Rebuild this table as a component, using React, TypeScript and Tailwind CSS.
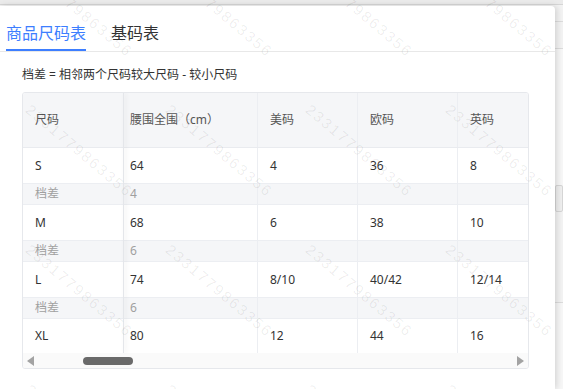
import React from "react";

const FONT = "font-['Noto_Sans','Noto_Sans_CJK_SC',sans-serif]";

type Row = { kind: "size"; cells: string[] } | { kind: "diff"; cells: string[] };

const rows: Row[] = [
  { kind: "size", cells: ["S", "64", "4", "36", "8"] },
  { kind: "diff", cells: ["档差", "4", "", "", ""] },
  { kind: "size", cells: ["M", "68", "6", "38", "10"] },
  { kind: "diff", cells: ["档差", "6", "", "", ""] },
  { kind: "size", cells: ["L", "74", "8/10", "40/42", "12/14"] },
  { kind: "diff", cells: ["档差", "6", "", "", ""] },
  { kind: "size", cells: ["XL", "80", "12", "44", "16"] },
];

const colW = ["w-[101px] pl-[12px]", "w-[134px] pl-[6px]", "w-[100px] pl-[12px]", "w-[100px] pl-[12px]", "w-[100px] pl-[12px]"];

const headers = ["尺码", "腰围全围（cm）", "美码", "欧码", "英码"];

const marks: { x: number; y: number }[] = [];
for (const y of [11, 151, 291, 431]) {
  for (const x of [79, 219, 359, 499, 639]) marks.push({ x, y });
}

export default function App() {
  return (
    <div className={`relative w-[563px] h-[389px] overflow-hidden bg-[#f3f3f3] ${FONT}`}>
      <div className="h-[5px] bg-[#ebebeb] border-b border-[#d6d6d6]" />
      <div className="flex h-[384px] pt-[1px]">
        <div className="w-[555px] h-full bg-white rounded-tr-[4px] shadow-[2px_0_6px_rgba(0,0,0,0.14)] relative z-10">
          {/* tabs */}
          <div className="flex h-[46px] pl-[6px] gap-[25px] border-b border-[#e8e8e8]">
            <div className="flex flex-col pt-[15px]">
              <div className="text-[16px] leading-[24px] text-[#3d7eff]">商品尺码表</div>
              <div className="mt-[4px] h-[2px] bg-[#3d7eff]" />
            </div>
            <div className="flex flex-col pt-[15px]">
              <div className="text-[16px] leading-[24px] text-[#333]">基码表</div>
            </div>
          </div>
          <div className="px-[22px]">
            <div className="pt-[14px] text-[12px] leading-[18px] text-[#333]">
              档差 = 相邻两个尺码较大尺码 - 较小尺码
            </div>
            <div className="mt-[8px] w-[507px] border border-[#e6e8ec] rounded-[3px] overflow-hidden relative">
              <div className="overflow-hidden">
                <div className="w-[535px]">
                  <div className="flex h-[55px] bg-[#f5f6f8] border-b border-[#e9ebef]">
                    {headers.map((h, i) => (
                      <div
                        key={i}
                        className={`${colW[i]} shrink-0 flex items-center text-[12px] text-[#555] border-r border-[#eceef2]`}
                      >
                        {h}
                      </div>
                    ))}
                  </div>
                  {rows.map((r, ri) => (
                    <div
                      key={ri}
                      className={
                        r.kind === "size"
                          ? `flex ${ri === rows.length - 1 ? "h-[34px]" : "h-[36px] border-b border-[#eceef2]"}`
                          : "flex h-[21px] bg-[#f5f6f8] border-b border-[#eceef2]"
                      }
                    >
                      {r.cells.map((c, ci) => (
                        <div
                          key={ci}
                          className={`${colW[ci]} shrink-0 flex items-center text-[12px] border-r border-[#eceef2] ${
                            r.kind === "size" ? "text-[#333]" : "text-[#a0a0a0]"
                          }`}
                        >
                          {c}
                        </div>
                      ))}
                    </div>
                  ))}
                </div>
              </div>
              {/* scrollbar */}
              <div className="h-[15px] bg-[#fafafa] flex items-center relative">
                <div className="ml-[4px] w-0 h-0 border-y-[5px] border-y-transparent border-r-[7px] border-r-[#a3a3a3]" />
                <div className="ml-[49px] w-[50px] h-[8px] rounded-full bg-[#6a6a6a]" />
                <div className="ml-auto mr-[4px] w-0 h-0 border-y-[5px] border-y-transparent border-l-[7px] border-l-[#a3a3a3]" />
              </div>
              {/* fixed column shadow */}
              <div className="absolute left-[100px] top-0 h-[260px] w-[1px] bg-[#e4e6ea] shadow-[2px_0_4px_rgba(0,0,0,0.12)]" />
            </div>
          </div>
        </div>
        <div className="flex-1 flex flex-col">
          <div className="h-[15px]" />
          <div className="h-[27px] border-t border-[#dcdcdc]" />
          <div className="h-[137px] border-t border-[#dcdcdc] bg-[#f7f7f7]" />
          <div className="h-[27px] border border-[#d6d6d6] bg-[#efefef] rounded-[2px]" />
          <div className="h-[90px]" />
          <div className="flex-1 border-t border-[#dcdcdc] bg-[#f7f7f7]" />
        </div>
      </div>
      {/* watermark */}
      <div className="absolute inset-0 pointer-events-none z-20">
        {marks.map((m, i) => (
          <span
            key={i}
            className="absolute text-[15px] tracking-[2px] text-[rgba(0,0,0,0.07)] whitespace-nowrap -translate-x-1/2 -translate-y-1/2 rotate-[40deg] font-['Liberation_Sans',sans-serif]"
            style={{ left: m.x, top: m.y }}
          >
            2331779863356
          </span>
        ))}
      </div>
    </div>
  );
}
